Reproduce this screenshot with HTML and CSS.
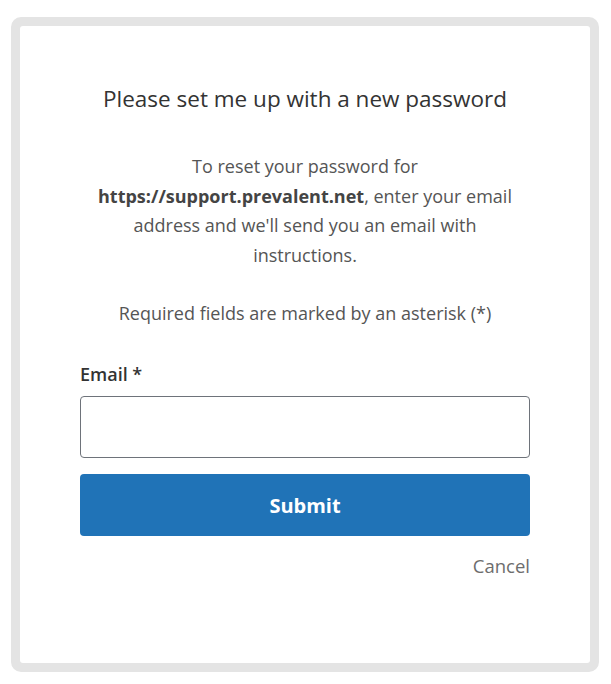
FILE: index.html
```html
<!DOCTYPE html>
<html lang="en">
<head>
<meta charset="utf-8">
<title>Reset password</title>
<link rel="stylesheet" href="styles.css">
</head>
<body>
<div class="frame">
  <div class="card">
    <h1 class="title">Please set me up with a new password</h1>
    <p class="intro">To reset your password for <strong>https://support.prevalent.net</strong>, enter your email address and we'll send you an email with instructions.</p>
    <p class="required">Required fields are marked by an asterisk (*)</p>
    <form class="form">
      <label class="label" for="email">Email *</label>
      <input class="input" id="email" type="email">
      <button class="submit" type="button">Submit</button>
      <div class="cancel-row"><a class="cancel" href="#">Cancel</a></div>
    </form>
  </div>
</div>
</body>
</html>
```

FILE: styles.css
```css
html, body {
  margin: 0;
  padding: 0;
  background: #ffffff;
}
body {
  font-family: "Open Sans", "Noto Sans", sans-serif;
  color: #444;
}
.frame {
  margin: 17px 12px 12px 11px;
  height: 637px;
  border: 9px solid #e4e4e4;
  border-radius: 10px;
  background: #e4e4e4;
}
.card {
  background: #fff;
  border-radius: 3px;
  height: 100%;
  box-sizing: border-box;
  padding: 58px 60px 0 60px;
  display: flex;
  flex-direction: column;
}
.title {
  margin: 0;
  font-size: 22.5px;
  font-weight: 400;
  color: #333;
  text-align: center;
  line-height: 30px;
}
.intro {
  margin: 38px 0 0;
  font-size: 18px;
  line-height: 29.5px;
  color: #555;
  text-align: center;
  padding: 0 9px;
}
.intro strong {
  color: #444;
  font-weight: 700;
}
.required {
  margin: 29px 0 0;
  font-size: 18px;
  line-height: 29.5px;
  color: #555;
  text-align: center;
}
.form {
  margin-top: 33px;
  display: flex;
  flex-direction: column;
}
.label {
  font-size: 18px;
  font-weight: 600;
  color: #333;
  line-height: 24px;
}
.input {
  margin-top: 10px;
  height: 62px;
  box-sizing: border-box;
  border: 1px solid #6e737a;
  border-radius: 4px;
  font: inherit;
}
.submit {
  margin-top: 16px;
  height: 62px;
  padding-top: 3px;
  border: none;
  border-radius: 4px;
  background: #2073b7;
  color: #fff;
  font-family: inherit;
  font-size: 20px;
  font-weight: 700;
}
.cancel-row {
  margin-top: 18px;
  display: flex;
  justify-content: flex-end;
}
.cancel {
  font-size: 18.5px;
  color: #6d6d6d;
  text-decoration: none;
  line-height: 24px;
}
```
